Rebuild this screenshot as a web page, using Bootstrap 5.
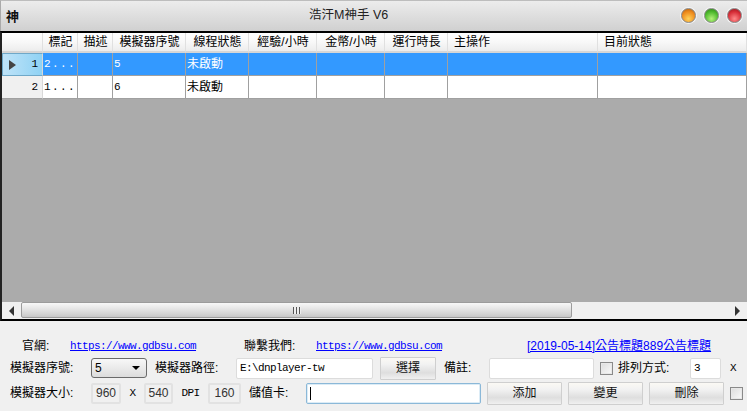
<!DOCTYPE html>
<html lang="zh-Hant"><head><meta charset="utf-8">
<link href="https://cdn.jsdelivr.net/npm/bootstrap@5.3.0/dist/css/bootstrap.min.css" rel="stylesheet">
<style>
html,body{height:411px;overflow:hidden}
body{font-family:"Liberation Sans","Noto Sans CJK TC",sans-serif;font-size:12px;line-height:1;color:#000;background:#f0f0f0}
.win{width:747px;height:411px}
.titlebar{height:31px;padding:0 5px 2px 5px;background:linear-gradient(#ececec,#d0d0d0);border-top:1px solid #bdbdbd;border-left:1px solid #aaa}
.tlogo{font-family:"Noto Sans CJK TC",sans-serif;font-size:13px;width:17px;font-weight:700;color:#111;line-height:1}
.ttitle{font-size:12.5px;color:#222;margin-left:286px}
.orbs{margin-left:auto;gap:8px}
.orb{width:15px;height:15px;border-radius:50%;border:1px solid #8a8a8a;box-shadow:0 0 0 1px #f4f4f4}
.o1{background:radial-gradient(circle at 50% 75%,#ffd25a,#ee8a1c 60%,#a85a10)}
.o2{background:radial-gradient(circle at 50% 75%,#b4f27a,#4cb82c 60%,#2c7a18)}
.o3{background:radial-gradient(circle at 50% 75%,#ff8a8a,#d62c36 60%,#8c1820)}
.gridwrap{height:290px;flex:none;border-top:2px solid #000;border-bottom:2px solid #000;border-left:2px solid #222;background:#ababab}
.garea{height:269px}
.dgrid{table-layout:fixed;border-collapse:separate;border-spacing:0;width:745px}
.dgrid th{height:20px;font-weight:400;text-align:center;vertical-align:middle;padding:0 0 1px 1px;background:linear-gradient(#fff 0,#f8f8f8 50%,#ececec);border-right:1px solid #e0e0e0;border-bottom:2px solid #d6d6d6;white-space:nowrap;overflow:hidden}
.dgrid th.lft{text-align:left;padding-left:6px}
.dgrid td{height:23px;padding:0 0 0 1px;background:#fff;border-right:1px solid #a0a0a0;border-bottom:1px solid #a0a0a0;vertical-align:middle;white-space:nowrap;overflow:hidden}
.dgrid tr.sel td{background:#3399ff;color:#fff}
.dgrid td.rowh{background:#f0f0f0;text-align:right;padding-right:4px;border-right:1px solid #d8d8d8;position:relative;font-size:11px;font-family:"Liberation Mono",monospace}
.dgrid tr.sel td.rowh{background:linear-gradient(90deg,#bfe3f8,#8fd2f4);color:#000;border:1px solid #6fa8c8;border-right-color:#d8d8d8}
.caret-r{position:absolute;left:6px;top:6px;width:0;height:0;border-left:7px solid #444;border-top:5px solid transparent;border-bottom:5px solid transparent}
.c0{width:41px}.c1,.c2{width:35px}.c3{width:73px}.c4{width:63px}.c5,.c6{width:68px}.c7{width:63px}.c8{width:150px}.c9{width:149px}
.mono{font-family:"Liberation Mono","Noto Sans CJK TC",monospace;font-size:11px;letter-spacing:-.6px}
.dgrid td.spc{letter-spacing:1.4px}
.hbar{height:17px;background:#f0f0f0}
.sbtn{width:19px;display:flex;align-items:center;justify-content:center;flex:none}
.al{width:0;height:0;border-right:5px solid #333;border-top:5px solid transparent;border-bottom:5px solid transparent}
.ar{width:0;height:0;border-left:5px solid #333;border-top:5px solid transparent;border-bottom:5px solid transparent}
.sthumb{width:551px;height:16px;background:linear-gradient(#f8f8f8,#e4e4e4 45%,#c8c8c8);border:1px solid #9c9c9c;border-radius:2px;display:flex;align-items:center;justify-content:center;flex:none}
.grip{width:8px;height:7px;background:repeating-linear-gradient(90deg,#555 0 1px,#eee 1px 3px)}
.strack{flex:1}
.panel{padding-top:14px;background:#f0f0f0}
.frow{height:22px;white-space:nowrap}
.lnk{color:#00f;text-decoration:underline}
.fld{height:21px;background:#fff;border:1px solid #dcdcdc;border-radius:2px;padding:0 3px;display:flex;align-items:center;flex:none}
.fld.ro{background:#f0f0f0;justify-content:center;font-size:12px;color:#333;border-width:2px;border-color:#e2e2e2;padding:0}
.fld.act{border-color:#8bb8d8;box-shadow:inset 0 0 0 1px #dcecf6}
.fcaret{width:1px;height:13px;background:#000}
.cbo{width:56px;height:20px;border:1px solid #6a6a6a;border-radius:3px;background:linear-gradient(#f8f8f8,#dcdcdc);padding:0 3px;display:flex;align-items:center;justify-content:space-between;flex:none}
.tri{width:0;height:0;border-top:4px solid #000;border-left:4px solid transparent;border-right:4px solid transparent;margin-right:3px}
.wbtn{height:23px;background:linear-gradient(#fbf9f4,#f2f2f2 30%,#dedede 70%,#f0f0f0);border:1px solid #cfcfcf;border-radius:1px;display:flex;align-items:center;justify-content:center;flex:none;color:#111}
.chk{width:13px;height:13px;border:1px solid #8a8a8a;background:linear-gradient(135deg,#dcdcdc,#fafafa);flex:none;box-shadow:inset 0 0 0 1px #e8e8e8;margin-left:6px}
.fx{flex:none}
.a1{margin-left:22px;width:48px}.a2{width:174px}.a3{width:72px}.a4{width:211px}
.r2{margin-top:0}.r3{margin-top:3px}
.lab81{margin-left:10px;width:81px}
.lab2{margin-left:8px;width:81px}
.fpath{width:137px}
.bsel{width:56px;margin-left:7px}
.lab3{margin-left:8px;width:45px}
.fnote{width:105px}
.lab4{margin-left:5px;width:72px}
.fnum{width:31px}
.xm{margin-left:9px}
.f960{width:30px}.x1{width:23px}.f540{width:29px}.x2{width:35px}.f160{width:33px}
.lab5{margin-left:8px;width:57px}
.fcard{width:175px}
.bact{width:75px;margin-left:6px}
</style></head><body>
<div class="win d-flex flex-column">
 <div class="titlebar d-flex align-items-center flex-none">
  <span class="tlogo">神</span>
  <span class="ttitle">浩汗M神手 V6</span>
  <span class="orbs d-flex"><span class="orb o1"></span><span class="orb o2"></span><span class="orb o3"></span></span>
 </div>
 <div class="gridwrap">
  <div class="garea">
  <table class="dgrid">
   <colgroup><col class="c0"><col class="c1"><col class="c2"><col class="c3"><col class="c4"><col class="c5"><col class="c6"><col class="c7"><col class="c8"><col class="c9"></colgroup>
   <thead><tr><th></th><th>標記</th><th>描述</th><th>模擬器序號</th><th>線程狀態</th><th>經驗/小時</th><th>金幣/小時</th><th>運行時長</th><th class="lft">主操作</th><th class="lft">目前狀態</th></tr></thead>
   <tbody>
    <tr class="sel"><td class="rowh"><span class="caret-r"></span>1</td><td class="mono spc">2...</td><td></td><td class="mono">5</td><td>未啟動</td><td></td><td></td><td></td><td></td><td></td></tr>
    <tr><td class="rowh">2</td><td class="mono spc">1...</td><td></td><td class="mono">6</td><td>未啟動</td><td></td><td></td><td></td><td></td><td></td></tr>
   </tbody>
  </table>
  </div>
  <div class="d-flex hbar">
   <span class="sbtn"><span class="al"></span></span><span class="sthumb"><span class="grip"></span></span><span class="strack"></span><span class="sbtn"><span class="ar"></span></span>
  </div>
 </div>
 <div class="panel flex-grow-1">
  <div class="frow d-flex align-items-center">
   <span class="a1 fx">官網:</span><a class="lnk mono a2 fx" href="#">https://www.gdbsu.com</a>
   <span class="a3 fx">聯繫我們:</span><a class="lnk mono a4 fx" href="#">https://www.gdbsu.com</a>
   <a class="lnk fx" href="#">[2019-05-14]公告標題889公告標題</a>
  </div>
  <div class="frow r2 d-flex align-items-center">
   <span class="fx lab81">模擬器序號:</span>
   <span class="cbo"><span>5</span><span class="tri"></span></span>
   <span class="fx lab2">模擬器路徑:</span>
   <span class="fld mono fpath">E:\dnplayer-tw</span>
   <span class="wbtn bsel">選擇</span>
   <span class="fx lab3">備註:</span>
   <span class="fld fnote"></span>
   <span class="chk"></span>
   <span class="fx lab4">排列方式:</span>
   <span class="fld mono fnum">3</span>
   <span class="mono xm">X</span>
  </div>
  <div class="frow r3 d-flex align-items-center">
   <span class="fx lab81">模擬器大小:</span>
   <span class="fld ro f960">960</span>
   <span class="mono text-center x1">X</span>
   <span class="fld ro f540">540</span>
   <span class="mono text-center x2">DPI</span>
   <span class="fld ro f160">160</span>
   <span class="fx lab5">儲值卡:</span>
   <span class="fld act fcard"><span class="fcaret"></span></span>
   <span class="wbtn bact">添加</span>
   <span class="wbtn bact">變更</span>
   <span class="wbtn bact">刪除</span>
   <span class="chk"></span>
  </div>
 </div>
</div>
<script src="https://cdn.jsdelivr.net/npm/bootstrap@5.3.0/dist/js/bootstrap.bundle.min.js"></script>
</body></html>
